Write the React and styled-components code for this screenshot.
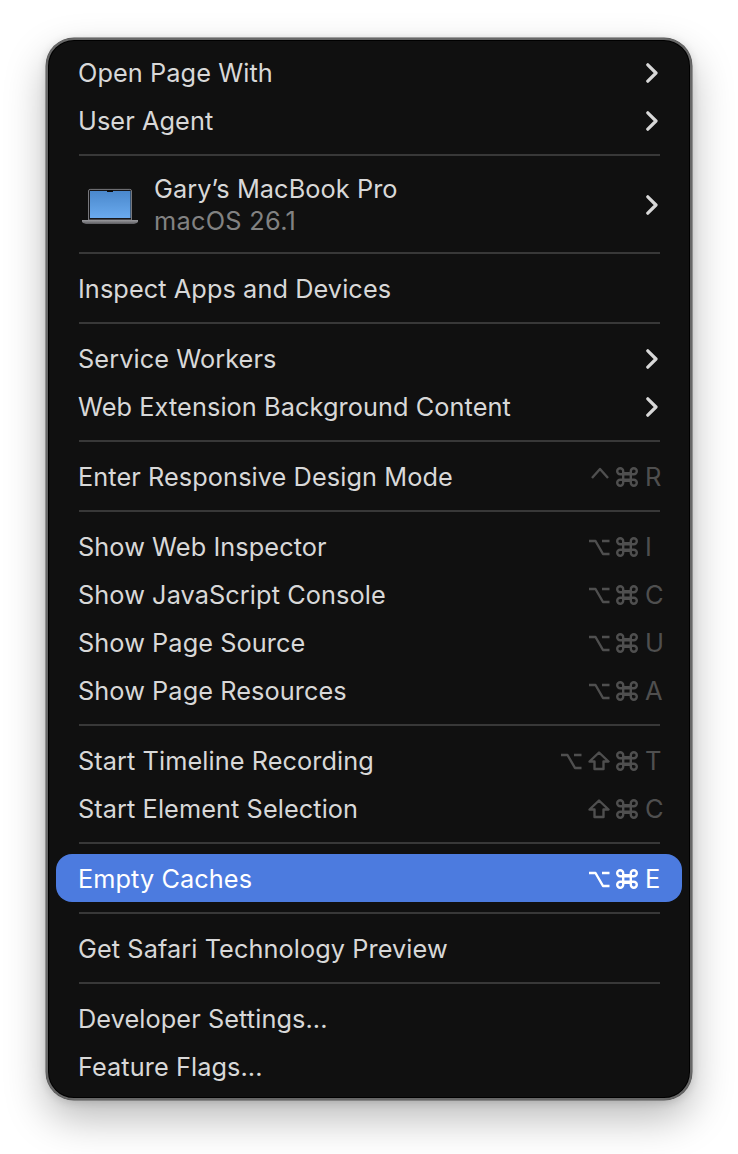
import React from "react";
import styled, { createGlobalStyle } from "styled-components";

const Global = createGlobalStyle`
  html, body { margin: 0; padding: 0; background: #fff; }
  body { font-family: Inter, "Liberation Sans", sans-serif; }
`;

const Page = styled.div`
  width: 738px;
  height: 1154px;
  padding: 38px 46px 0;
  box-sizing: border-box;
  overflow: hidden;
`;

const Panel = styled.div`
  width: 646px;
  height: 1062px;
  box-sizing: border-box;
  background: #101010;
  border-radius: 28px;
  box-shadow: inset 0 0 0 1px #000, 0 0 0 0.5px #555, 0 18px 42px rgba(0,0,0,.28), 0 2px 10px rgba(0,0,0,.14);
  border: 2px solid #686868;
  padding: 8px 8px 7px;
  display: flex;
  flex-direction: column;
`;

const Row = styled.div`
  height: ${p => p.$tall ? 76 : 48}px;
  flex: none;
  display: flex;
  align-items: center;
  padding: 0 20px 0 22px;
  border-radius: 16px;
  font-size: 25.3px;
  font-weight: 430;
  letter-spacing: 0.08px;
  color: ${p => p.$active ? "#fff" : "#d8d8d8"};
  background: ${p => p.$active ? "#4c7bdf" : "transparent"};
`;

const Label = styled.span`
  flex: 1;
  white-space: nowrap;
`;

const Separator = styled.div`
  flex: none;
  height: 2px;
  margin: 10px 22px 10px 23px;
  background: #383838;
`;

const Chevron = styled.svg`
  width: 12px;
  height: 20px;
  margin: 2px 4px 0 0;
  fill: none;
  stroke: #d8d8d8;
  stroke-width: 3.2;
  stroke-linecap: round;
  stroke-linejoin: round;
`;

const Keys = styled.div`
  display: flex;
  align-items: center;
  gap: 6px;
  margin-top: 2px;
  color: ${p => p.$active ? "#fff" : "#4f4f4f"};
`;

const KeySlot = styled.svg`
  width: 22px;
  height: 22px;
  flex: none;
  fill: none;
  stroke: currentColor;
  stroke-width: 2.4;
  stroke-linecap: butt;
  stroke-linejoin: round;
`;

const Letter = styled.span`
  width: 17px;
  margin-left: 1px;
  font-size: 25.5px;
  line-height: 1;
`;

const Device = styled.div`
  display: flex;
  align-items: center;
  gap: 16px;
  flex: 1;
  margin: 2px 0 0 4px;
`;

const DeviceText = styled.div`
  display: flex;
  flex-direction: column;
  line-height: 32px;
`;

const DeviceOS = styled.span`
  color: #828282;
  letter-spacing: 0.3px;
`;

const Laptop = () => (
  <svg width="56" height="38" viewBox="0 0 56 38">
    <defs>
      <linearGradient id="scr" x1="0" y1="0" x2="0" y2="1">
        <stop offset="0" stopColor="#4a88cc" />
        <stop offset="1" stopColor="#6aaaee" />
      </linearGradient>
      <linearGradient id="base" x1="0" y1="0" x2="0" y2="1">
        <stop offset="0" stopColor="#9a9a9e" />
        <stop offset="1" stopColor="#5c5c60" />
      </linearGradient>
    </defs>
    <path d="M6.5 5a1.6 1.6 0 0 1 1.6-1.6h39.8A1.6 1.6 0 0 1 49.5 5V34h-43z" fill="#17171a" stroke="#77777b" strokeWidth="1" />
    <rect x="8" y="5" width="40.5" height="27" fill="url(#scr)" />
    <rect x="25" y="4" width="6" height="2" rx="0.6" fill="#0c0c0c" />
    <path d="M0 34h56v1.2q0 2.8-7 2.8H7q-7 0-7-2.8z" fill="url(#base)" />
  </svg>
);

const Arrow = () => (
  <Chevron viewBox="0 0 12 20"><path d="M1.8 1.8 10 10 1.8 18.2" /></Chevron>
);

const GLYPHS = {
  ctrl: <path d="M4 12 12 3 20 12" />,
  opt: <path d="M1 5h6.5l7.5 13h6.5M14 5h7.5" />,
  shift: <path d="M11 2.5 20.5 11.5H15.5V19H6.5V11.5H1.5Z" />,
  cmd: <path d="M7.2 7.2h7.6v7.6H7.2zM7.2 7.2V5.2a3 3 0 1 0-3 3h13.6a3 3 0 1 0-3-3v11.6a3 3 0 1 0 3-3H4.2a3 3 0 1 0 3 3z" />,
};

const Shortcut = ({ mods, letter, active }) => (
  <Keys $active={active}>
    {mods.map(m => <KeySlot key={m} viewBox="0 0 22 22" role="img" aria-label={m}>{GLYPHS[m]}</KeySlot>)}
    <Letter>{letter}</Letter>
  </Keys>
);

const GROUPS = [
  [{ t: "Open Page With", arrow: true }, { t: "User Agent", arrow: true }],
  [{ device: true }],
  [{ t: "Inspect Apps and Devices" }],
  [{ t: "Service Workers", arrow: true }, { t: "Web Extension Background Content", arrow: true }],
  [{ t: "Enter Responsive Design Mode", mods: ["ctrl", "cmd"], key: "R" }],
  [
    { t: "Show Web Inspector", mods: ["opt", "cmd"], key: "I" },
    { t: "Show JavaScript Console", mods: ["opt", "cmd"], key: "C" },
    { t: "Show Page Source", mods: ["opt", "cmd"], key: "U" },
    { t: "Show Page Resources", mods: ["opt", "cmd"], key: "A" },
  ],
  [
    { t: "Start Timeline Recording", mods: ["opt", "shift", "cmd"], key: "T" },
    { t: "Start Element Selection", mods: ["shift", "cmd"], key: "C" },
  ],
  [{ t: "Empty Caches", mods: ["opt", "cmd"], key: "E", active: true }],
  [{ t: "Get Safari Technology Preview" }],
  [{ t: "Developer Settings..." }, { t: "Feature Flags..." }],
];

export default function App() {
  return (
    <Page>
      <Global />
      <Panel>
        {GROUPS.map((group, g) => (
          <React.Fragment key={g}>
            {g > 0 && <Separator />}
            {group.map((item, i) =>
              item.device ? (
                <Row key={i} $tall>
                  <Device>
                    <Laptop />
                    <DeviceText>
                      <span>Gary’s MacBook Pro</span>
                      <DeviceOS>macOS 26.1</DeviceOS>
                    </DeviceText>
                  </Device>
                  <Arrow />
                </Row>
              ) : (
                <Row key={i} $active={item.active}>
                  <Label>{item.t}</Label>
                  {item.arrow && <Arrow />}
                  {item.mods && <Shortcut mods={item.mods} letter={item.key} active={item.active} />}
                </Row>
              )
            )}
          </React.Fragment>
        ))}
      </Panel>
    </Page>
  );
}
